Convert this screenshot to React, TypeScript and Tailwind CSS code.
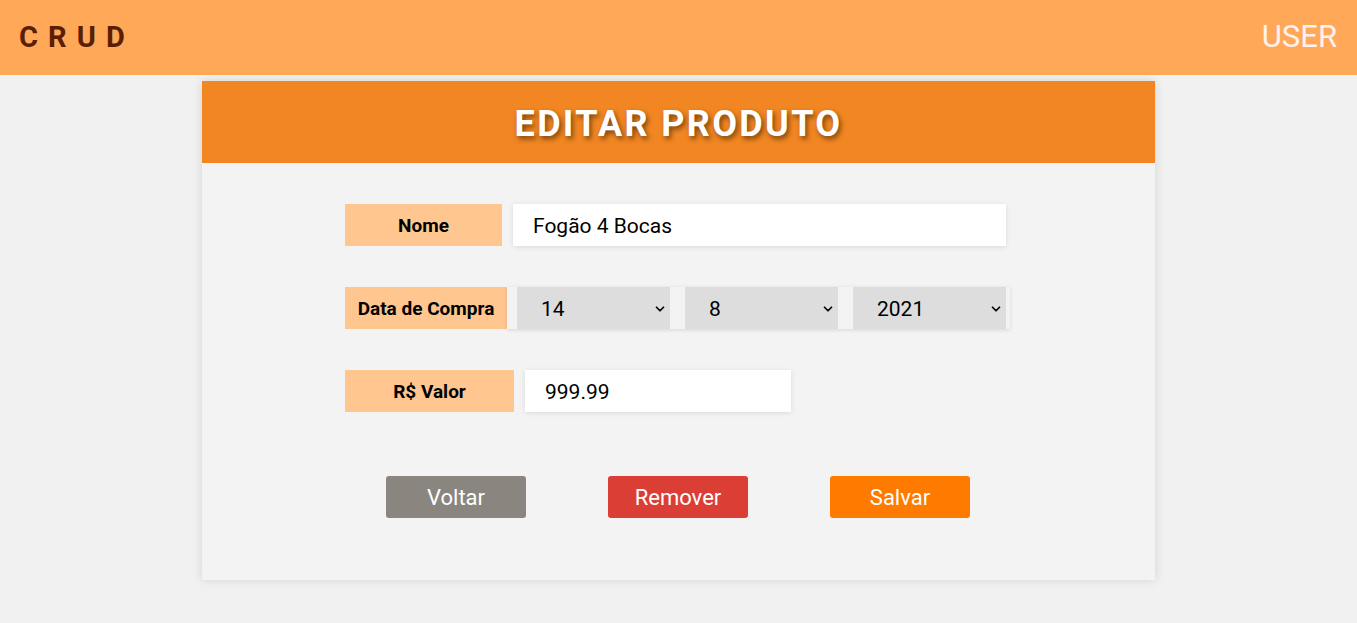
import { ChevronDown } from "lucide-react";

const Select = ({ value }: { value: string }) => (
  <div className="w-[153px] h-[42px] bg-[#dddddd] flex items-center justify-between pl-[24px] pr-[3px] pt-[3px] text-[21px] text-black">
    <span>{value}</span>
    <ChevronDown className="w-[14px] h-[14px] -mt-[2px]" strokeWidth={3} />
  </div>
);

const Label = ({ text, w }: { text: string; w: string }) => (
  <div className={`${w} h-[42px] bg-[#ffc690] flex items-center justify-center pt-[2px] text-[19px] font-bold text-black`}>
    {text}
  </div>
);

const App = () => {
  return (
    <div className="min-h-[623px] bg-[#f1f1f1] font-['Roboto',sans-serif]">
      {/* Top bar */}
      <header className="h-[75px] bg-[#ffa858] flex items-center justify-between pl-[19px] pr-[20px]">
        <h1 className="text-[29px] font-bold tracking-[0.35em] text-[#5a1e02]">CRUD</h1>
        <span className="text-[31px] text-[#fff1ee]">USER</span>
      </header>

      {/* Card */}
      <main className="w-[953px] mx-auto mt-[6px] bg-[#f3f3f3] shadow-[0_0_10px_rgba(0,0,0,0.12)]">
        <div className="h-[82px] bg-[#f18622] flex items-center justify-center pt-[3px]">
          <h2 className="text-[36px] font-bold tracking-[0.065em] text-white [text-shadow:2px_3px_5px_rgba(60,30,0,0.65)]">
            EDITAR PRODUTO
          </h2>
        </div>

        <div className="pl-[143px] pt-[41px] pb-[62px]">
          <div className="flex items-center gap-[11px]">
            <Label text="Nome" w="w-[157px]" />
            <div className="w-[493px] h-[42px] bg-white shadow-[0_1px_5px_rgba(0,0,0,0.1)] flex items-center pl-[20px] pt-[3px] text-[21px] text-black">
              Fogão 4 Bocas
            </div>
          </div>

          <div className="flex items-center mt-[41px]">
            <Label text="Data de Compra" w="w-[162px]" />
            <div className="flex gap-[15px] pl-[10px] pr-[4px] bg-[#f3f3f3] shadow-[0_1px_4px_rgba(0,0,0,0.12)]">
              <Select value="14" />
              <Select value="8" />
              <Select value="2021" />
            </div>
          </div>

          <div className="flex items-center gap-[11px] mt-[41px]">
            <Label text="R$ Valor" w="w-[169px]" />
            <div className="w-[266px] h-[42px] bg-white shadow-[0_1px_5px_rgba(0,0,0,0.1)] flex items-center pl-[20px] pt-[3px] text-[21px] text-black">
              999.99
            </div>
          </div>

          <div className="flex gap-[82px] mt-[64px] pl-[41px]">
            <button className="w-[140px] h-[42px] rounded-[3px] bg-[#8a857f] text-white text-[22px]">Voltar</button>
            <button className="w-[140px] h-[42px] rounded-[3px] bg-[#db3e35] text-white text-[22px]">Remover</button>
            <button className="w-[140px] h-[42px] rounded-[3px] bg-[#ff7b00] text-white text-[22px]">Salvar</button>
          </div>
        </div>
      </main>
    </div>
  );
};

export default App;
